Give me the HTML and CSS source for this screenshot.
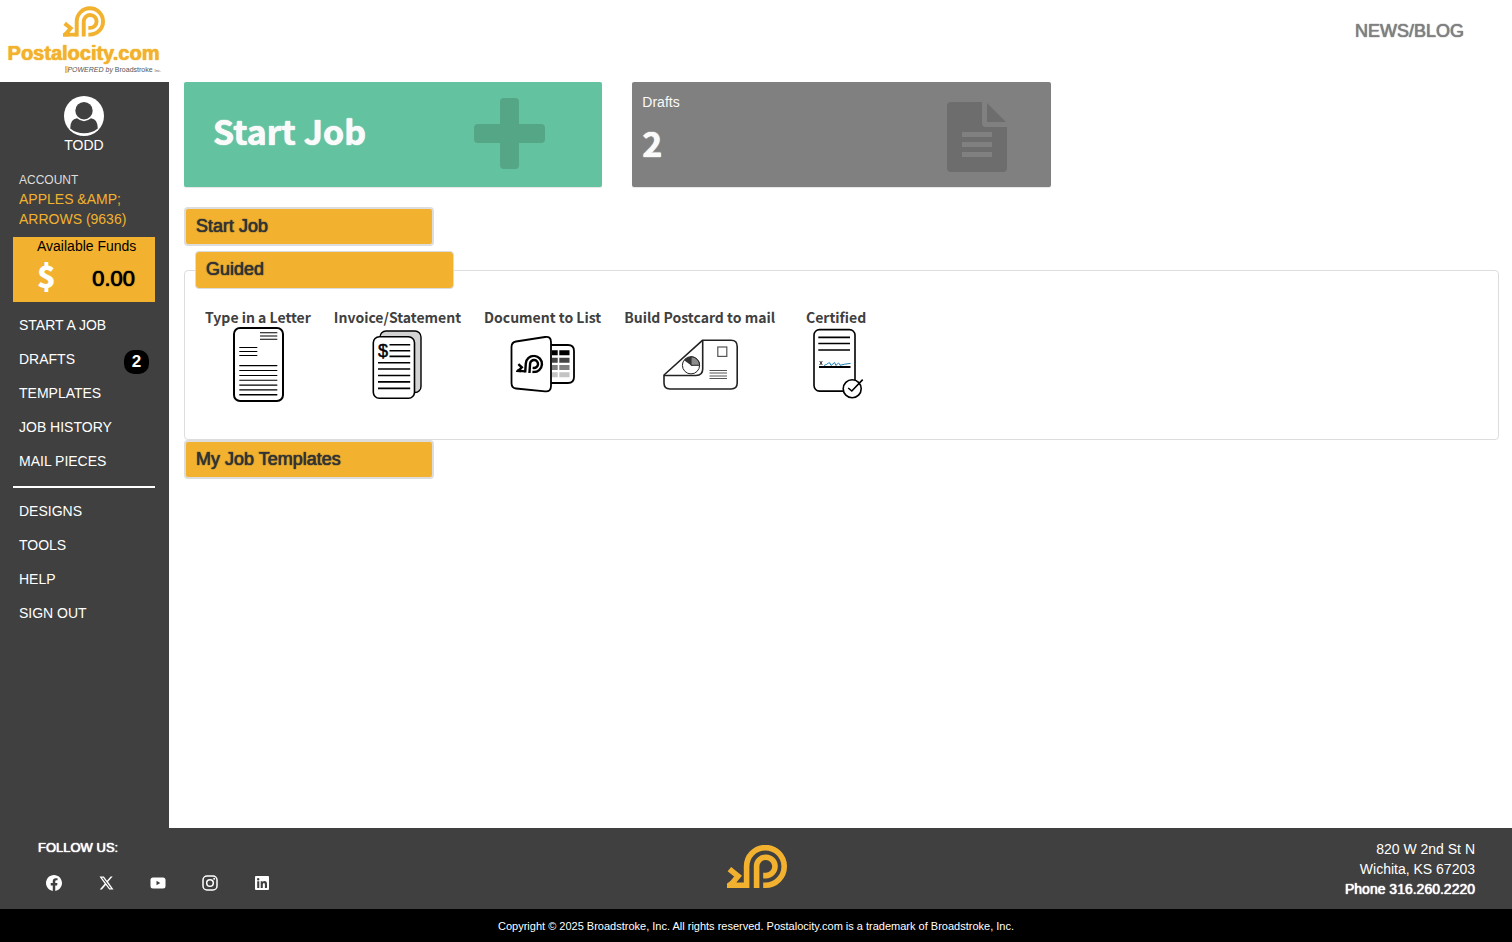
FILE: index.html
```html
<!DOCTYPE html>
<html lang="en">
<head>
<meta charset="utf-8">
<meta name="viewport" content="width=device-width, initial-scale=1">
<title>Postalocity.com</title>
<link rel="stylesheet" href="styles.css">
</head>
<body>
<svg class="defs" aria-hidden="true">
  <symbol id="mark" viewBox="0 0 60 43">
    <g fill="none" stroke="currentColor" stroke-width="5.6">
      <path d="M19.6 43V21.7A18.8 18.8 0 1 1 38.4 40.2H36.2"/>
      <path d="M29.6 43V21.3A9.2 9.2 0 1 1 38.6 30.6H36.2"/>
      <path d="M2.4 24.2L11 31.2L3.4 40.2H20"/>
    </g>
    <path fill="currentColor" d="M0 38.5L3 36.5H9V43H0z"/>
  </symbol>
</svg>

<header class="top">
  <a class="brand" href="#">
    <svg class="brand-mark"><use href="#mark"/></svg>
    <span class="brand-name">Postalocity.com</span>
    <span class="brand-sub"><i>POWERED by</i> <b>Broadstroke</b> <small>Inc.</small></span>
  </a>
  <a class="news" href="#">NEWS/BLOG</a>
</header>

<div class="body">
  <aside class="side">
    <div class="user">
      <svg class="avatar" viewBox="0 0 40 40"><circle cx="20" cy="20" r="20" fill="#fff"/><circle cx="20" cy="14.7" r="8.7" fill="#404040"/><path d="M6.2 32.5Q6.2 23 13 22.3Q20 28 27 22.3Q33.8 23 33.8 32.5Q28 37.3 20 37.3T6.2 32.5z" fill="#404040"/></svg>
      <span>TODD</span>
    </div>
    <div class="account">
      <div class="account-label">ACCOUNT</div>
      <a href="#">APPLES &amp;AMP; ARROWS (9636)</a>
    </div>
    <div class="funds">
      <div class="funds-label">Available Funds</div>
      <div class="funds-row"><span class="dollar">$</span><span class="amount">0.00</span></div>
    </div>
    <nav class="nav">
      <a href="#">START A JOB</a>
      <a href="#">DRAFTS <span class="badge">2</span></a>
      <a href="#">TEMPLATES</a>
      <a href="#">JOB HISTORY</a>
      <a href="#">MAIL PIECES</a>
      <hr>
      <a href="#">DESIGNS</a>
      <a href="#">TOOLS</a>
      <a href="#">HELP</a>
      <a href="#">SIGN OUT</a>
    </nav>
  </aside>

  <main class="main">
    <div class="tiles">
      <a class="tile tile-start" href="#">
        <span class="tile-title">Start Job</span>
        <svg class="plus" viewBox="0 0 71 71"><path d="M30 0H41Q45 0 45 4V26H67Q71 26 71 30V41Q71 45 67 45H45V67Q45 71 41 71H30Q26 71 26 67V45H4Q0 45 0 41V30Q0 26 4 26H26V4Q26 0 30 0z"/></svg>
      </a>
      <a class="tile tile-drafts" href="#">
        <span class="tile-text"><span>Drafts</span><strong>2</strong></span>
        <svg class="doc" viewBox="0 0 60 70"><path fill-rule="evenodd" d="M4 0H35V21Q35 25 39 25H60V66Q60 70 56 70H4Q0 70 0 66V4Q0 0 4 0zM15 30V35H45V30zM15 40V45H45V40zM15 50V55H45V50z"/><path d="M40 1L59 20H40z"/></svg>
      </a>
    </div>

    <h2 class="panel-title">Start Job</h2>
    <fieldset class="group">
      <legend>Guided</legend>
      <div class="jobs">
        <a class="job" href="#">Type in a Letter
          <svg viewBox="0 0 76 76" fill="none" stroke="#000">
            <rect x="14" y="1" width="49" height="73" rx="6" stroke-width="2"/>
            <path stroke-width="1.1" d="M40 5.7H57.3M40 9H57.3M40 12.3H57.3M19.3 20.5H37.3M19.3 24.5H37.3M19.3 28.5H37.3M19.3 38.6H57.3M19.3 43.5H57.3M19.3 48.5H57.3M19.3 53.2H57.3"/>
            <path stroke-width="1.4" d="M19.3 58.1H57.3M19.3 62.9H57.3M19.3 67.7H57.3"/>
          </svg>
        </a>
        <a class="job" href="#">Invoice/Statement
          <svg viewBox="0 0 76 76" stroke="#000">
            <rect x="21" y="4" width="41" height="61.5" rx="6" fill="#d3d3d3" stroke-width="1.4"/>
            <rect x="14.3" y="9.8" width="41.2" height="61.5" rx="6" fill="#fff" stroke-width="1.6"/>
            <path stroke-width="1.6" d="M30.5 17.7H51.2M30.5 23.7H51.2M30.5 29.4H51.2M19 35.7H51.2M19 42H51.2M19 48.5H51.2M19 54.9H51.2M19 61.4H51.2"/>
            <text class="bill" x="19" y="30" stroke-width=".5">$</text>
          </svg>
        </a>
        <a class="job" href="#">Document to List
          <svg viewBox="0 0 76 76" fill="none" stroke="#000" stroke-width="1.8">
            <path d="M46 18H63Q69 18 69 24V50Q69 56 63 56H46"/>
            <path fill="#fff" d="M11 14.5L40 10Q46 9 46 15V59Q46 65 40 64.3L11 61.5Q6.5 61 6.5 56V20Q6.5 15.3 11 14.5z"/>
            <g stroke="none">
              <path fill="#000" d="M47 23.3H52.7V28.3H47zM54.3 23.3H64.5V28.3H54.3z"/>
              <path fill="#444" d="M47 30.7H52.7V35.7H47zM54.3 30.7H64.5V35.7H54.3z"/>
              <path fill="#808080" d="M47 38H52.7V43H47zM54.3 38H64.5V43H54.3z"/>
              <path fill="#c4c4c4" d="M47 45.3H52.7V50.3H47zM54.3 45.3H64.5V50.3H54.3z"/>
            </g>
            <use href="#mark" x="11.5" y="27.5" width="27.5" height="18.5" color="#000" transform="rotate(4 25 37)"/>
          </svg>
        </a>
        <a class="job" href="#">Build Postcard to mail
          <svg viewBox="0 0 76 76" fill="none" stroke="#222" stroke-width="1.6">
            <path d="M2 48L40.7 13.2H69Q75.2 13.2 75.2 19.4V56Q75.2 62 69 62H8Q2 62 2 56z" stroke-linejoin="round"/>
            <path d="M40.7 13.2V42Q40.7 48.5 34 48.5H2"/>
            <circle cx="29" cy="38.3" r="8.6" stroke-width="1"/>
            <path d="M29 38.3V29.7A8.6 8.6 0 0 1 37.6 38.3z" fill="#8c8c8c" stroke-width="1"/>
            <path d="M29 38.3V29.7A8.6 8.6 0 0 0 22 33.3z" fill="#333" stroke="none"/>
            <rect x="55.8" y="20" width="9" height="9.4" stroke="#555" stroke-width="1.2"/>
            <path stroke-width="1" d="M47.5 43.5H65M47.5 46H65M47.5 49H65M47.5 51.5H65" stroke="#555"/>
          </svg>
        </a>
        <a class="job" href="#">Certified
          <svg viewBox="0 0 76 76" fill="none" stroke="#000" stroke-width="1.6">
            <rect x="16" y="2.6" width="41" height="61.5" rx="5.5"/>
            <path d="M20.3 10.4H52M20.3 16.5H52M20.3 23H52"/>
            <path d="M21.7 34L24.3 38M24.3 34L21.7 38" stroke-width=".8"/>
            <path d="M21 40H52.5" stroke-width="2"/>
            <path d="M26 38.5Q29 37.5 30.5 36Q32 34.5 33 38.5L36.5 35.5L38 38.5Q41 34 42 38.3Q46 37 52.5 36.4" stroke="#1c7fb5" stroke-width="1"/>
            <circle cx="54.2" cy="61.7" r="9" fill="#fff"/>
            <path d="M50.2 61L53.8 64L64.7 52.6"/>
          </svg>
        </a>
      </div>
    </fieldset>
    <h2 class="panel-title">My Job Templates</h2>
  </main>
</div>

<footer>
  <div class="foot">
    <div class="follow">
      <div class="follow-title">FOLLOW US:</div>
      <div class="social">
        <a href="#" aria-label="Facebook"><svg viewBox="0 0 16 16"><path d="M16 8.05C16 3.6 12.4 0 8 0S0 3.600 0 8.050C0 12.070 2.930 15.400 6.750 16V10.380H4.720V8.050H6.750V6.280C6.750 4.260 7.940 3.150 9.770 3.150C10.640 3.150 11.560 3.310 11.560 3.310V5.290H10.550C9.560 5.290 9.250 5.910 9.250 6.550V8.050H11.470L11.110 10.380H9.250V16C13.070 15.400 16 12.070 16 8.050z"/></svg></a>
        <a href="#" aria-label="X"><svg viewBox="0 0 16 16"><path fill-rule="evenodd" d="M12.600 1.500H14.700L10 6.800L15.500 14.500H11.200L7.800 9.900L3.900 14.500H1.700L6.700 8.700L1.500 1.500H5.900L9 5.700zM11.800 13.200H13L5.200 2.700H3.900z"/></svg></a>
        <a href="#" aria-label="YouTube"><svg viewBox="0 0 16 16"><path fill-rule="evenodd" d="M3 2.500H13Q15.500 2.500 15.500 5V11Q15.500 13.500 13 13.500H3Q.5 13.500 .5 11V5Q.5 2.500 3 2.500zM6.500 5.800V10.200L10.300 8z"/></svg></a>
        <a href="#" aria-label="Instagram"><svg viewBox="0 0 16 16"><g fill="none" stroke="#fff" stroke-width="1.500"><rect x="1" y="1" width="14" height="14" rx="4"/><circle cx="8" cy="8" r="3.300"/></g><circle cx="12.200" cy="3.800" r="1"/></svg></a>
        <a href="#" aria-label="LinkedIn"><svg viewBox="0 0 16 16"><path fill-rule="evenodd" d="M2 1H14Q15 1 15 2V14Q15 15 14 15H2Q1 15 1 14V2Q1 1 2 1zM3.200 6.200V13H5.300V6.200zM3 4.200A1.200 1.200 0 1 0 5.400 4.200A1.200 1.200 0 1 0 3 4.200zM6.700 6.200V13H8.800V9.500Q8.800 7.900 9.900 7.900T10.900 9.500V13H13V9Q13 6 10.500 6Q9.300 6 8.700 7V6.200z"/></svg></a>
      </div>
    </div>
    <svg class="foot-mark"><use href="#mark"/></svg>
    <address>820 W 2nd St N<br>Wichita, KS 67203<br><span class="phone">Phone 316.260.2220</span></address>
  </div>
  <div class="copy">Copyright © 2025 Broadstroke, Inc. All rights reserved. Postalocity.com is a trademark of Broadstroke, Inc.</div>
</footer>
</body>
</html>
```

FILE: styles.css
```css
:root {
  --orange: #f2b22f;
  --dark: #404040;
  --line: #ddd;
  --heading: "Noto Sans CJK SC", "Noto Sans", sans-serif;
  --heavy: 0 0 1px currentColor, 0 0 1px currentColor;
}
* { box-sizing: border-box; }
body {
  margin: 0;
  min-height: 100vh;
  display: flex;
  flex-direction: column;
  background: #fff;
  font: 14px/20px "Liberation Sans", Arial, sans-serif;
  color: #333;
}
a { color: inherit; text-decoration: none; }
svg { display: block; flex: none; }
.defs { position: absolute; width: 0; height: 0; }

.top {
  display: flex;
  justify-content: space-between;
  min-height: 82px;
  padding-right: 48px;
}
.brand {
  display: flex;
  flex-direction: column;
  align-items: center;
  width: 167px;
  padding-top: 6px;
}
.brand-mark { width: 42px; height: 31px; color: var(--orange); }
.brand-name {
  margin-top: 4px;
  font: 700 20px/24px "Liberation Sans", Arial, sans-serif;
  text-shadow: var(--heavy);
  color: var(--orange);
}
.brand-sub {
  align-self: flex-end;
  padding-right: 6px;
  font-size: 7px;
  line-height: 10px;
  color: #555;
}
.brand-sub i {
  padding-left: 2px;
  background: linear-gradient(90deg, var(--orange), transparent 5px);
}
.brand-sub b { font-weight: 400; }
.brand-sub small { font-size: 4px; }
.news {
  padding-top: 20px;
  font-size: 18px;
  line-height: 22px;
  color: #808080;
  text-shadow: var(--heavy);
}

.body { display: flex; flex: 1; }
.side {
  flex: none;
  width: 169px;
  padding: 14px 14px 0 13px;
  background: var(--dark);
  color: #fff;
}
.user { display: flex; flex-direction: column; align-items: center; line-height: 18px; }
.avatar { width: 40px; height: 40px; }
.account { padding: 17px 6px 0; color: var(--orange); }
.account-label { font-size: 12px; line-height: 18px; color: #ddd; }
.funds {
  margin-top: 8px;
  height: 65px;
  padding: 0 20px 0 24px;
  background: var(--orange);
  color: #000;
}
.funds-label { line-height: 18px; white-space: nowrap; text-align: center; }
.funds-row { display: flex; justify-content: space-between; line-height: 48px; }
.dollar { font: 900 31px/40px var(--heading); color: #fff; }
.amount { font-size: 22px; text-shadow: var(--heavy); }
.nav { padding-top: 6px; }
.nav a {
  display: flex;
  align-items: center;
  justify-content: space-between;
  height: 34px;
  padding: 0 6px;
}
.nav hr { margin: 8px 0 6px; border: 0; height: 2px; background: #fff; }
.badge {
  width: 25px;
  height: 24px;
  margin-top: 6px;
  border-radius: 10px;
  background: #000;
  font-size: 17px;
  line-height: 24px;
  font-weight: 700;
  text-align: center;
}

.main { flex: 1; min-width: 0; }
.tiles {
  display: grid;
  grid-template-columns: repeat(3, 1fr);
  gap: 30px;
  padding: 0 13px 0 15px;
  margin-bottom: 20px;
}
.tile {
  display: flex;
  justify-content: space-between;
  height: 105px;
  border-radius: 2px;
  box-shadow: 0 1px 1px rgba(0, 0, 0, .1);
  color: #fafafa;
}
.tile-start { padding: 16px 57px 0 29px; background: #63c2a0; }
.tile-drafts { padding: 10px 44px 0 10px; background: #808080; }
.tile-title, .tile strong {
  font: 700 34px/40px var(--heading);
  text-shadow: var(--heavy);
}
.tile-title { padding-top: 13px; }
.tile-text { display: flex; flex-direction: column; }
.tile strong { padding-top: 11px; }
.plus { width: 71px; height: 71px; fill: #55a587; }
.doc { width: 60px; height: 70px; margin-top: 10px; fill: #6d6d6d; }

.panel-title, .group legend {
  margin: 0;
  border: 2px solid var(--line);
  border-radius: 4px;
  background: var(--orange);
  padding: 0 10px;
  font-size: 18px;
  line-height: 35px;
  font-weight: 400;
  text-shadow: var(--heavy);
}
.panel-title { width: 250px; margin-left: 15px; }
.group {
  min-width: 0;
  margin: 5px 13px 0 15px;
  padding: 18px 20px 36px;
  border: 1px solid var(--line);
  border-radius: 4px;
}
.group legend {
  width: 259px;
  margin-left: -10px;
  padding-bottom: 2px;
  border-width: 1px;
  line-height: 34px;
}
.jobs { display: flex; flex-wrap: wrap; gap: 23px; }
.job {
  display: flex;
  flex-direction: column;
  align-items: center;
  font: 700 14px/20px var(--heading);
  color: #404040;
}
.job svg { width: 76px; height: 76px; }
.bill { font: 400 18px "Liberation Sans", Arial, sans-serif; fill: #000; }

.foot {
  display: grid;
  grid-template-columns: 1fr auto 1fr;
  min-height: 81px;
  padding: 10px 37px 0 38px;
  background: var(--dark);
  color: #fff;
}
.follow-title { font-size: 13px; text-shadow: var(--heavy); }
.social { display: flex; gap: 36px; padding: 17px 8px 0; }
.social svg { width: 16px; height: 16px; fill: #fff; }
.foot-mark { width: 60px; height: 43px; margin-top: 7px; color: var(--orange); }
address { font-style: normal; text-align: right; padding-top: 1px; }
.phone { text-shadow: var(--heavy); }
.copy {
  padding: 7px 0 6px;
  background: #000;
  color: #fff;
  font-size: 11px;
  text-align: center;
}
```
